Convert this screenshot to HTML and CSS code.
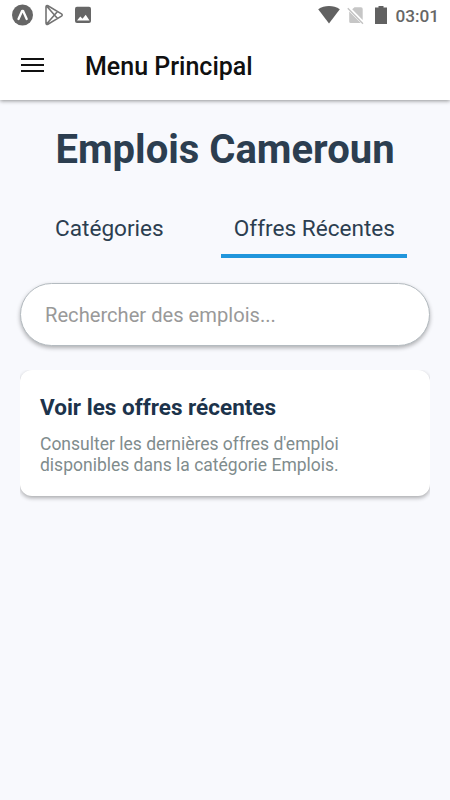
FILE: index.html
```html
<!DOCTYPE html>
<html lang="fr">
<head>
<meta charset="utf-8">
<title>Menu Principal</title>
<link rel="stylesheet" href="styles.css">
</head>
<body>
<header class="top">
  <div class="status">
    <svg width="84" height="28" viewBox="0 0 84 28" fill="none">
      <circle cx="12.500" cy="15" r="10.500" fill="#666"/>
      <path d="M8.500 19 12.200 10.800h.8l3.700 8.200" stroke="#fff" stroke-width="2.300" stroke-linecap="round" stroke-linejoin="round"/>
      <path d="M36 7c0-1.200.9-1.800 1.900-1.200L51.500 13.900c.9.6.9 1.600 0 2.200L37.900 24.200c-1 .6-1.900 0-1.900-1.200ZM37 6.500 47.300 18.300M37 23.500 47.300 11.700" stroke="#737373" stroke-width="1.600" stroke-linejoin="round"/>
      <path d="M67 6.700h12a2 2 0 0 1 2 2v12.300a2 2 0 0 1-2 2H67a2 2 0 0 1-2-2V8.700a2 2 0 0 1 2-2Z" fill="#666"/>
      <path d="m67 20.500 3.300-4 2.200 2.300 3.200-4 3.800 5.700Z" fill="#fff"/>
    </svg>
    <div class="status-right">
      <svg width="70" height="28" viewBox="0 0 70 28" fill="none">
        <path d="M.2 9.200C6.500 4.800 15.500 4.800 21.800 9.200L11 23.500Z" fill="#616161"/>
        <path d="M36.500 7.200H43q1.700 0 1.700 1.700V19.900L34.200 9.300ZM31.200 11.500 42.700 23H32.700Q31.200 23 31.200 21.500Z" fill="#c6c6c6"/>
        <path d="M29.800 8.300 45 23.800" stroke="#c2c2c2" stroke-width="1.300"/>
        <path d="M60.500 6h5v1.500H69V24H57V7.500h3.500Z" fill="#616161"/>
      </svg>
      <span class="clock">03:01</span>
    </div>
  </div>
  <div class="bar">
    <svg class="menu" width="24" height="16" viewBox="0 0 24 16"><path d="M1 1h23v2H1ZM1 7h23v2H1ZM1 13h23v2H1Z" fill="#111"/></svg>
    <span class="bar-title">Menu Principal</span>
  </div>
</header>
<main class="content">
  <h1 class="title">Emplois Cameroun</h1>
  <nav class="tabs">
    <a class="tab">Catégories</a>
    <a class="tab active">Offres Récentes</a>
  </nav>
  <div class="search">Rechercher des emplois...</div>
  <div class="list">
    <article class="card">
      <h2 class="card-title">Voir les offres récentes</h2>
      <p class="card-text">Consulter les dernières offres d'emploi<br>disponibles dans la catégorie Emplois.</p>
    </article>
  </div>
</main>
</body>
</html>
```

FILE: styles.css
```css
* { box-sizing: border-box; }
body {
  margin: 0;
  height: 800px;
  overflow: hidden;
  background: #f8f9fd;
  font-family: Roboto, "Liberation Sans", sans-serif;
}
.top {
  height: 100px;
  background: #fff;
  box-shadow: 0 1px 4px rgba(0, 0, 0, .42);
}
.status {
  display: flex;
  justify-content: space-between;
  height: 32px;
  padding: 0 11px 0 10px;
}
.status-right { display: flex; }
.clock {
  margin-left: 7px;
  font-size: 17.200px;
  font-weight: 500;
  line-height: 32px;
  color: #666;
}
.bar {
  display: flex;
  align-items: center;
  height: 68px;
  padding-left: 20px;
}
.menu { margin-bottom: 2px; }
.bar-title {
  margin: 2px 0 0 41px;
  font-size: 25px;
  font-weight: 500;
  line-height: 32px;
  color: #101010;
}
.content { padding: 23px 20px 0; }
.title {
  margin: 0;
  text-align: center;
  font-size: 40px;
  font-weight: 700;
  line-height: 54px;
  color: #2c3e50;
}
.tabs {
  display: flex;
  justify-content: space-around;
  margin-top: 25px;
}
.tab {
  height: 56px;
  padding: 11px 12.500px 0;
  border-bottom: 4px solid transparent;
  font-size: 22.600px;
  line-height: 32px;
  color: #2c3e50;
}
.active { border-color: #2196dc; }
.search {
  height: 63px;
  margin-top: 25px;
  padding: 0 24px;
  border: 1px solid #b4bbc0;
  border-radius: 32px;
  background: #fff;
  box-shadow: 0 2px 4px rgba(0, 0, 0, .3);
  font-size: 20.150px;
  line-height: 62px;
  color: #999;
}
.list {
  margin-top: 24px;
  height: 430px;
  overflow: hidden;
}
.card {
  height: 126px;
  padding: 20px;
  border-radius: 12px;
  background: #fff;
  box-shadow: 0 2px 4px rgba(0, 0, 0, .32);
}
.card-title {
  margin: 0;
  font-size: 22.500px;
  font-weight: 700;
  line-height: 34px;
  color: #1c334b;
}
.card-text {
  margin: 10px 0 0;
  font-size: 17.500px;
  line-height: 21px;
  color: #7f8c8d;
}
```
